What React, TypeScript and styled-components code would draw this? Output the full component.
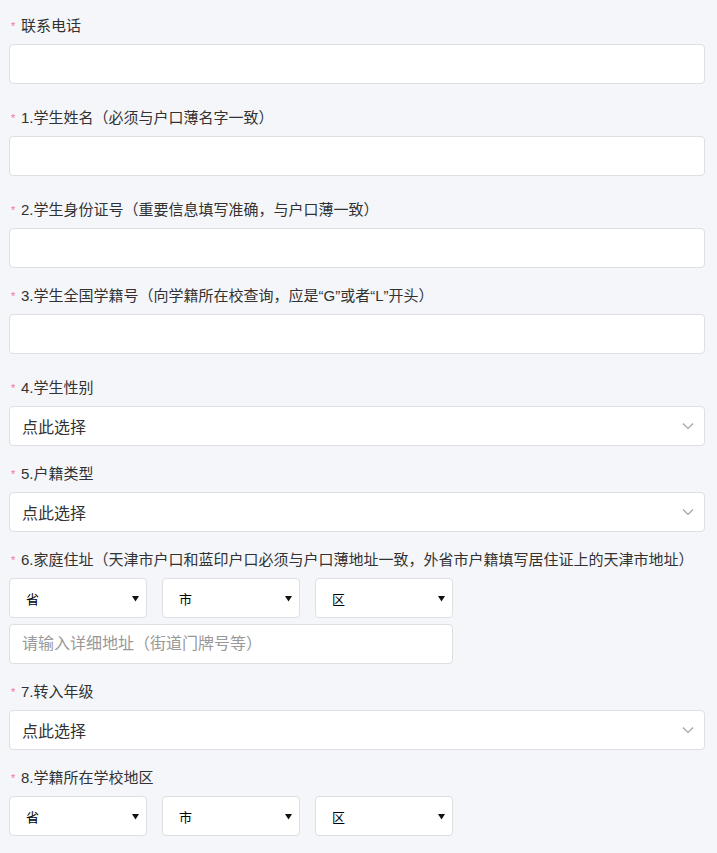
import React from 'react';
import styled, {createGlobalStyle} from 'styled-components';

const GlobalStyle = createGlobalStyle`
    html, body {
        margin: 0;
        padding: 0;
        background: #f5f6fa;
    }
    body {
        font-family: "Liberation Sans", "Noto Sans CJK SC", sans-serif;
        color: #323233;
    }
`;

const Page = styled.div`
    padding: 16px 12px 20px 9px;
`;

const FieldBlock = styled.div<{$gap: number}>`
    margin-bottom: ${(p) => p.$gap}px;
`;

const Label = styled.div`
    display: flex;
    align-items: center;
    height: 20px;
    margin-bottom: 8px;
    font-size: 15px;
    line-height: 20px;
    color: #323233;
    white-space: nowrap;
`;

const Star = styled.span`
    box-sizing: border-box;
    width: 12px;
    padding-left: 2px;
    font-size: 11px;
    color: #f2719a;
    line-height: 20px;
`;

const TextInput = styled.input<{$width?: number}>`
    display: block;
    box-sizing: border-box;
    width: ${(p) => (p.$width ? `${p.$width}px` : '100%')};
    height: 40px;
    padding: 0 12px;
    border: 1px solid #dedfe3;
    border-radius: 4px;
    background: #fff;
    font-family: inherit;
    font-size: 16px;
    color: #323233;
    outline: none;
    &::placeholder {
        color: #999;
    }
`;

const PickerBox = styled.div`
    display: flex;
    align-items: center;
    justify-content: space-between;
    box-sizing: border-box;
    height: 40px;
    padding: 0 10px 0 12px;
    border: 1px solid #dedfe3;
    border-radius: 4px;
    background: #fff;
    font-size: 16px;
    color: #323233;
`;

const RegionRow = styled.div`
    display: flex;
    gap: 15px;
    margin-bottom: 6px;
`;

const RegionSelect = styled.div`
    display: flex;
    align-items: center;
    justify-content: space-between;
    box-sizing: border-box;
    width: 138px;
    height: 40px;
    padding: 0 7px 0 16px;
    border: 1px solid #dedfe3;
    border-radius: 4px;
    background: #fff;
    font-size: 13px;
    color: #000;
`;

const Chevron = () => (
    <svg width="12" height="8" viewBox="0 0 12 8" fill="none">
        <path d="M1 1.5 L6 6.5 L11 1.5" stroke="#a0a0a0" strokeWidth="1.1" />
    </svg>
);

const Triangle = () => (
    <svg width="7" height="7" viewBox="0 0 7 7">
        <path d="M0 1 H7 L3.5 6.5 Z" fill="#111" />
    </svg>
);

const FieldLabel: React.FC<{text: string}> = ({text}) => (
    <Label>
        <Star>*</Star>
        {text}
    </Label>
);

const Regions = () => (
    <RegionRow>
        {['省', '市', '区'].map((r) => (
            <RegionSelect key={r}>
                <span>{r}</span>
                <Triangle />
            </RegionSelect>
        ))}
    </RegionRow>
);

const Picker = () => (
    <PickerBox>
        <span>点此选择</span>
        <Chevron />
    </PickerBox>
);

export default function App() {
    return (
        <>
            <GlobalStyle />
            <Page>
                <FieldBlock $gap={24}>
                    <FieldLabel text="联系电话" />
                    <TextInput type="tel" />
                </FieldBlock>
                <FieldBlock $gap={24}>
                    <FieldLabel text="1.学生姓名（必须与户口薄名字一致）" />
                    <TextInput />
                </FieldBlock>
                <FieldBlock $gap={18}>
                    <FieldLabel text="2.学生身份证号（重要信息填写准确，与户口薄一致）" />
                    <TextInput />
                </FieldBlock>
                <FieldBlock $gap={24}>
                    <FieldLabel text="3.学生全国学籍号（向学籍所在校查询，应是“G”或者“L”开头）" />
                    <TextInput />
                </FieldBlock>
                <FieldBlock $gap={18}>
                    <FieldLabel text="4.学生性别" />
                    <Picker />
                </FieldBlock>
                <FieldBlock $gap={18}>
                    <FieldLabel text="5.户籍类型" />
                    <Picker />
                </FieldBlock>
                <FieldBlock $gap={18}>
                    <FieldLabel text="6.家庭住址（天津市户口和蓝印户口必须与户口薄地址一致，外省市户籍填写居住证上的天津市地址）" />
                    <Regions />
                    <TextInput $width={444} placeholder="请输入详细地址（街道门牌号等）" />
                </FieldBlock>
                <FieldBlock $gap={18}>
                    <FieldLabel text="7.转入年级" />
                    <Picker />
                </FieldBlock>
                <FieldBlock $gap={18}>
                    <FieldLabel text="8.学籍所在学校地区" />
                    <Regions />
                </FieldBlock>
            </Page>
        </>
    );
}
